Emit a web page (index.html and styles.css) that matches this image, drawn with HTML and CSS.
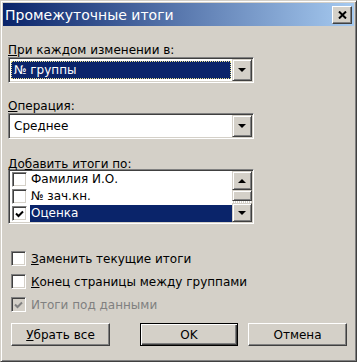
FILE: index.html
```html
<!DOCTYPE html>
<html lang="ru">
  <head>
    <meta charset="UTF-8" />
    <title>Промежуточные итоги</title>
    <link rel="stylesheet" href="styles.css">
  </head>
  <body>
    <div class="window">
      <div class="titlebar">
        <span class="title">Промежуточные итоги</span>
        <div class="close">
          <svg width="9" height="8" viewBox="0 0 9 8"><path d="M1 0.5 L8 7.5 M8 0.5 L1 7.5" stroke="#000" stroke-width="2" fill="none"/></svg>
        </div>
      </div>

      <div class="content">
        <div class="label first"><u>П</u>ри каждом изменении в:</div>
        <div class="combo">
          <div class="combo-value selected"><span>№ группы</span></div>
          <div class="raised drop">
            <svg width="8" height="4" viewBox="0 0 8 4"><polygon points="0,0 8,0 4,4" fill="#000"/></svg>
          </div>
        </div>

        <div class="label second"><u>О</u>перация:</div>
        <div class="combo">
          <div class="combo-value"><span>Среднее</span></div>
          <div class="raised drop">
            <svg width="8" height="4" viewBox="0 0 8 4"><polygon points="0,0 8,0 4,4" fill="#000"/></svg>
          </div>
        </div>

        <div class="label third">До<u>б</u>авить итоги по:</div>
        <div class="listbox">
          <div class="items">
            <div class="item">
              <span class="check"></span>
              <span class="item-text">Фамилия И.О.</span>
            </div>
            <div class="item">
              <span class="check"></span>
              <span class="item-text">№ зач.кн.</span>
            </div>
            <div class="item active">
              <span class="check">
                <svg width="9" height="8" viewBox="0 0 9 8"><path d="M1 3.5 L3.5 6 L8 1.5" stroke="#000" stroke-width="2" fill="none"/></svg>
              </span>
              <span class="item-text">Оценка</span>
            </div>
          </div>
          <div class="scrollbar">
            <div class="raised arrow">
              <svg width="8" height="4" viewBox="0 0 8 4"><polygon points="0,4 8,4 4,0" fill="#000"/></svg>
            </div>
            <div class="raised thumb"></div>
            <div class="track"></div>
            <div class="raised arrow">
              <svg width="8" height="4" viewBox="0 0 8 4"><polygon points="0,0 8,0 4,4" fill="#000"/></svg>
            </div>
          </div>
        </div>

        <div class="options">
          <div class="option">
            <span class="check"></span>
            <span><u>З</u>аменить текущие итоги</span>
          </div>
          <div class="option">
            <span class="check"></span>
            <span><u>К</u>онец страницы между группами</span>
          </div>
          <div class="option disabled">
            <span class="check">
              <svg width="9" height="8" viewBox="0 0 9 8"><path d="M1 3.5 L3.5 6 L8 1.5" stroke="#808080" stroke-width="2" fill="none"/></svg>
            </span>
            <span>Итоги под данными</span>
          </div>
        </div>

        <div class="buttons">
          <div class="button"><u>У</u>брать все</div>
          <div class="button default push">OK</div>
          <div class="button">Отмена</div>
        </div>
      </div>
    </div>
  </body>
</html>
```

FILE: styles.css
```css
body {
  margin: 0;
  background-color: #d4d0c8;
  font-family: "DejaVu Sans", Tahoma, sans-serif;
  font-size: 12px;
  color: #000;
}

.window {
  width: 357px;
  height: 362px;
  box-sizing: border-box;
  padding: 2px;
  border: 1px solid;
  border-color: #d4d0c8 #404040 #404040 #d4d0c8;
  box-shadow: inset 1px 1px #fff, inset -1px -1px #808080;
  background-color: #d4d0c8;
  display: flex;
  flex-direction: column;
}

/* Title bar */
.titlebar {
  height: 23px;
  display: flex;
  align-items: center;
  padding-left: 2px;
  background: linear-gradient(to right, #0a246a, #a6caf0);
  color: #fff;
}

.title {
  flex: 1;
  font-size: 14px;
}

.close {
  width: 20px;
  height: 18px;
  margin-right: 2px;
  box-sizing: border-box;
  display: flex;
  align-items: center;
  justify-content: center;
  background-color: #d4d0c8;
  border: 1px solid;
  border-color: #fff #404040 #404040 #fff;
  box-shadow: inset -1px -1px #808080;
}

/* Shared 3D bevels */
.raised {
  box-sizing: border-box;
  display: flex;
  align-items: center;
  justify-content: center;
  background-color: #d4d0c8;
  border: 1px solid;
  border-color: #d4d0c8 #404040 #404040 #d4d0c8;
  box-shadow: inset 1px 1px #fff, inset -1px -1px #808080;
}

.content {
  flex: 1;
  padding: 0 5px;
}

.label {
  line-height: 14px;
}

.label.first {
  margin-top: 17px;
}

.label.second {
  margin-top: 16px;
}

.label.third {
  margin-top: 18px;
  margin-bottom: -2px;
}

/* Combo boxes */
.combo {
  width: 246px;
  height: 26px;
  box-sizing: border-box;
  padding: 1px;
  display: flex;
  background-color: #fff;
  border: 1px solid;
  border-color: #808080 #fff #fff #808080;
  box-shadow: inset 1px 1px #404040, inset -1px -1px #d4d0c8;
}

.combo-value {
  flex: 1;
  height: 18px;
  margin: 2px 1px 0 1px;
  box-sizing: border-box;
  padding-left: 2px;
  line-height: 16px;
  border: 1px solid transparent;
}

.combo-value.selected {
  background-color: #0a246a;
  color: #fff;
  border: 1px dotted #e8e08c;
}

.drop {
  width: 20px;
  height: 22px;
}

/* List box */
.listbox {
  width: 246px;
  height: 55px;
  box-sizing: border-box;
  padding: 1px;
  display: flex;
  background-color: #fff;
  border: 1px solid;
  border-color: #808080 #fff #fff #808080;
  box-shadow: inset 1px 1px #404040, inset -1px -1px #d4d0c8;
}

.items {
  flex: 1;
}

.item {
  height: 17px;
  display: flex;
  align-items: center;
  padding-left: 2px;
}

.item-text {
  flex: 1;
  height: 17px;
  margin-left: 3px;
  padding-left: 1px;
  line-height: 17px;
}

.item.active .item-text {
  background-color: #0a246a;
  color: #fff;
}

.check {
  width: 15px;
  height: 15px;
  flex: none;
  box-sizing: border-box;
  display: flex;
  align-items: center;
  justify-content: center;
  background-color: #fff;
  border: 1px solid;
  border-color: #808080 #fff #fff #808080;
  box-shadow: inset 1px 1px #404040, inset -1px -1px #d4d0c8;
}

.scrollbar {
  width: 20px;
  display: flex;
  flex-direction: column;
}

.arrow {
  height: 19px;
}

.thumb {
  height: 11px;
}

.track {
  flex: 1;
  background: repeating-linear-gradient(to right, #fff 0 1px, #d4d0c8 1px 2px);
}

/* Check options */
.options {
  margin-top: 27px;
  display: flex;
  flex-direction: column;
  gap: 8px;
}

.option {
  height: 15px;
  display: flex;
  align-items: center;
  gap: 5px;
  padding-left: 3px;
}

.option.disabled {
  color: #808080;
}

.option.disabled .check {
  background-color: #d4d0c8;
}

/* Buttons */
.buttons {
  margin-top: 11px;
  display: flex;
  gap: 10px;
  padding: 0 2px 0 3px;
}

.button {
  width: 99px;
  height: 23px;
  box-sizing: border-box;
  display: flex;
  align-items: center;
  justify-content: center;
  border: 1px solid;
  border-color: #fff #404040 #404040 #fff;
  box-shadow: inset -1px -1px #808080;
}

.button.default {
  width: 98px;
  border: 1px solid #000;
  box-shadow: inset 1px 1px #fff, inset -1px -1px #404040, inset -2px -2px #808080;
}

.push {
  margin-left: auto;
}
```
